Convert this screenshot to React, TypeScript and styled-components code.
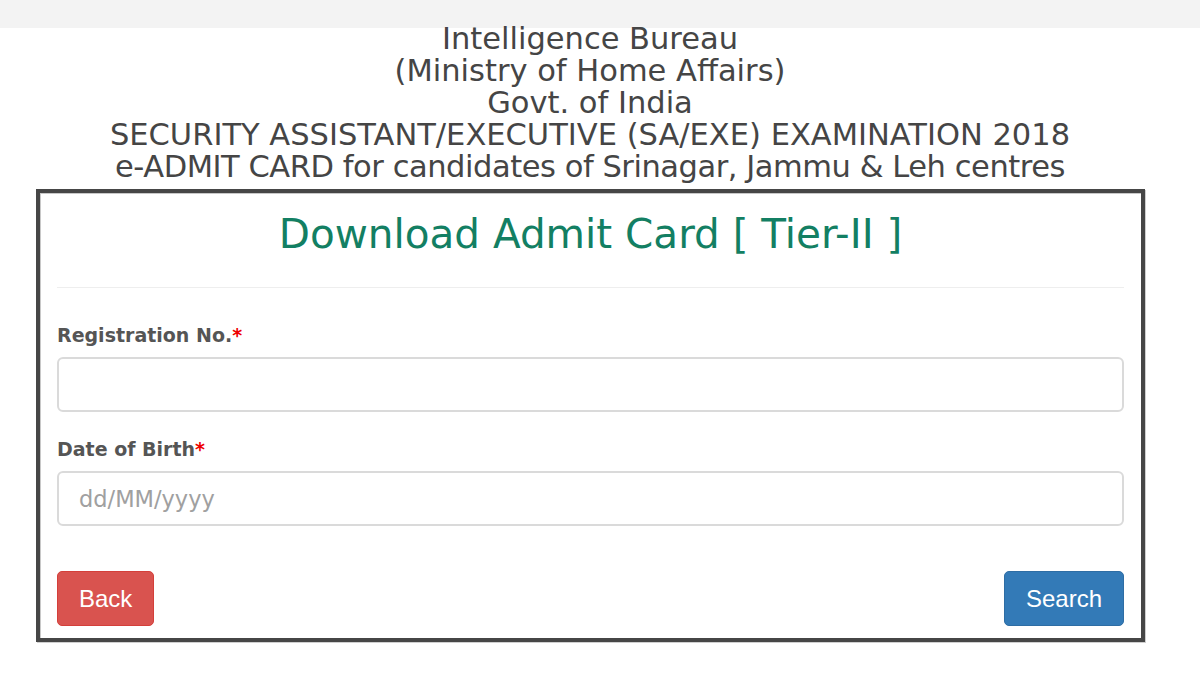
import React from "react";
import styled, { createGlobalStyle } from "styled-components";

const Global = createGlobalStyle`
  html, body { margin: 0; padding: 0; background: #fff; }
  body { width: 1200px; height: 676px; overflow: hidden; }
`;

const Page = styled.div`
  display: flex;
  flex-direction: column;
  width: 1200px;
`;

const TopBand = styled.div`
  height: 28px;
  background: #f3f3f3;
`;

const Header = styled.header`
  display: flex;
  flex-direction: column;
  align-items: center;
  font-family: "DejaVu Sans", sans-serif;
  font-size: 30.5px;
  line-height: 32px;
  color: #454545;
  margin-top: -5px;
  padding-right: 20px;
`;

const HeaderLine = styled.div<{ $tight?: boolean }>`
  white-space: nowrap;
  letter-spacing: ${(p) => (p.$tight ? "-0.45px" : "0")};
`;

const Card = styled.section`
  margin: 6px 0 0 36px;
  width: 1109px;
  height: 453px;
  box-sizing: border-box;
  border: 4px solid #464646;
  box-shadow: inset 1px 1px 0 #c8c8c8, 1px 1px 0 #cfcfcf;
  padding: 0 17px;
  display: flex;
  flex-direction: column;
`;

const Title = styled.h2`
  margin: 0;
  padding-top: 17px;
  height: 76px;
  box-sizing: border-box;
  text-align: center;
  font-family: "DejaVu Sans", sans-serif;
  font-weight: normal;
  font-size: 40.5px;
  line-height: 48px;
  color: #137f63;
`;

const Rule = styled.hr`
  margin: 18px 0 0;
  border: 0;
  border-top: 1px solid #eee;
`;

const Field = styled.div<{ $gap: number }>`
  display: flex;
  flex-direction: column;
  margin-top: ${(p) => p.$gap}px;
`;

const Label = styled.label`
  font-family: "DejaVu Sans", sans-serif;
  font-weight: bold;
  font-size: 19px;
  line-height: 24px;
  color: #555;
  margin-bottom: 10px;
`;

const Star = styled.span`
  color: #e00;
`;

const Input = styled.input`
  height: 55px;
  box-sizing: border-box;
  border: 2px solid #dadada;
  border-radius: 6px;
  padding: 0 20px;
  font-family: "DejaVu Sans", sans-serif;
  font-size: 22.5px;
  color: #555;
  outline: none;
  &::placeholder { color: #a0a0a0; }
`;

const Actions = styled.div`
  display: flex;
  justify-content: space-between;
  margin-top: 45px;
`;

const Button = styled.button<{ $variant: "danger" | "primary" }>`
  height: 55px;
  padding: 0 21px;
  border-radius: 5px;
  border: 1px solid ${(p) => (p.$variant === "danger" ? "#d43f3a" : "#2e6da4")};
  background: ${(p) => (p.$variant === "danger" ? "#d9534f" : "#337ab7")};
  color: #fff;
  font-family: "Liberation Sans", Arial, sans-serif;
  font-size: 24px;
`;

export default function App() {
  return (
    <Page>
      <Global />
      <TopBand />
      <Header>
        <HeaderLine>Intelligence Bureau</HeaderLine>
        <HeaderLine>(Ministry of Home Affairs)</HeaderLine>
        <HeaderLine>Govt. of India</HeaderLine>
        <HeaderLine>SECURITY ASSISTANT/EXECUTIVE (SA/EXE) EXAMINATION 2018</HeaderLine>
        <HeaderLine $tight>e-ADMIT CARD for candidates of Srinagar, Jammu &amp; Leh centres</HeaderLine>
      </Header>
      <Card>
        <Title>Download Admit Card [ Tier-II ]</Title>
        <Rule />
        <Field $gap={35}>
          <Label>
            Registration No.<Star>*</Star>
          </Label>
          <Input type="text" />
        </Field>
        <Field $gap={25}>
          <Label>
            Date of Birth<Star>*</Star>
          </Label>
          <Input type="text" placeholder="dd/MM/yyyy" />
        </Field>
        <Actions>
          <Button $variant="danger">Back</Button>
          <Button $variant="primary">Search</Button>
        </Actions>
      </Card>
    </Page>
  );
}
